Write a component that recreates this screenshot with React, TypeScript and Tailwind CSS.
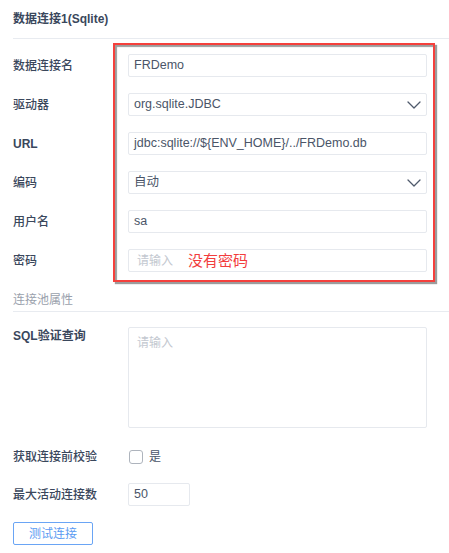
import { ChevronDown } from 'lucide-react';

const labelClass = 'w-[115px] shrink-0 text-[12px] font-medium text-[#3a475c]';
const inputClass =
  'flex h-[23px] items-center rounded-[2px] border border-[#e6e9ee] bg-white px-[5px] text-[12.5px] text-[#4a5568]';

function TextRow({ label, value, placeholder }: { label: React.ReactNode; value?: string; placeholder?: string }) {
  return (
    <div className="flex items-center">
      <span className={labelClass}>{label}</span>
      <div className={`${inputClass} w-[299px]`}>
        {value ? value : <span className="pl-[3px] text-[12px] text-[#c3c8d0]">{placeholder}</span>}
      </div>
    </div>
  );
}

function SelectRow({ label, value }: { label: string; value: string }) {
  return (
    <div className="flex items-center">
      <span className={labelClass}>{label}</span>
      <div className={`${inputClass} w-[299px] justify-between pr-0`}>
        <span>{value}</span>
        <ChevronDown size={24} strokeWidth={1.3} className="text-[#4f5a6c]" />
      </div>
    </div>
  );
}

export default function App() {
  return (
    <div
      className="relative h-[553px] w-[449px] overflow-hidden bg-white pl-[13px]"
      style={{ fontFamily: '"Liberation Sans", "Noto Sans CJK SC", sans-serif' }}
    >
      <div className="flex h-[39px] items-center border-b border-[#e8ebf0] pb-[1px]">
        <h1 className="text-[12px] font-bold text-[#3a475c]">数据连接1(Sqlite)</h1>
      </div>

      <div className="mt-[15px] flex flex-col gap-[16px]">
        <TextRow label="数据连接名" value="FRDemo" />
        <SelectRow label="驱动器" value="org.sqlite.JDBC" />
        <TextRow label={<span className="font-bold">URL</span>} value="jdbc:sqlite://${ENV_HOME}/../FRDemo.db" />
        <SelectRow label="编码" value="自动" />
        <TextRow label="用户名" value="sa" />
        <div className="flex items-center">
          <span className={labelClass}>密码</span>
          <div className={`${inputClass} relative w-[299px]`}>
            <span className="pl-[3px] text-[12px] text-[#c3c8d0]">请输入</span>
            <span className="absolute left-[59px] top-[1px] text-[15px] font-normal leading-[20px] text-[#f23d3d]">
              没有密码
            </span>
          </div>
        </div>
      </div>

      <div className="mt-[15px] flex h-[25px] items-center border-b border-[#e8ebf0] pt-[1px] text-[12px] text-[#9aa1ac]">
        连接池属性
      </div>

      <div className="mt-[15px] flex items-start">
        <span className={`${labelClass} leading-[18px]`}>
          <span className="font-bold">SQL</span>
          <span className="font-semibold">验证查询</span>
        </span>
        <div className="h-[101px] w-[299px] rounded-[2px] border border-[#e6e9ee] px-[8px] py-[6px] text-[12px] leading-[18px] text-[#c3c8d0]">
          请输入
        </div>
      </div>

      <div className="mt-[17px] flex h-[23px] items-center">
        <span className={labelClass}>获取连接前校验</span>
        <span className="ml-[1px] h-[14px] w-[14px] rounded-[3px] border border-[#aeb4bd] bg-white" />
        <span className="ml-[6px] text-[12px] text-[#4a5568]">是</span>
      </div>

      <div className="mt-[15px] flex items-center">
        <span className={labelClass}>最大活动连接数</span>
        <div className={`${inputClass} w-[62px]`}>50</div>
      </div>

      <button className="mt-[16px] flex h-[23px] w-[80px] items-center justify-center rounded-[2px] border border-[#6aa5f5] text-[12px] text-[#5b9bf2]">
        测试连接
      </button>

      {/* annotation box drawn over the connection fields */}
      <div className="pointer-events-none absolute left-[113px] top-[43px] h-[239px] w-[322px] border-2 border-[#f5403c] shadow-[2px_2px_1px_#9c9c9c,inset_2px_2px_1px_#9c9c9c]" />
    </div>
  );
}
